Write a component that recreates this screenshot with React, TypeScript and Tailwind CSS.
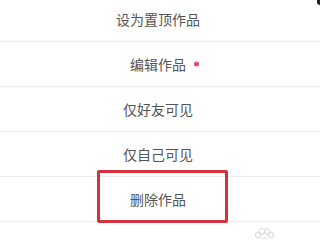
const rows = ['设为置顶作品', '编辑作品', '仅好友可见', '仅自己可见', '删除作品', '保存作品到相册'];

export default function App() {
  return (
    <div
      className="relative w-[320px] h-[239px] overflow-hidden bg-white"
      style={{ fontFamily: '"Noto Sans CJK SC", "Noto Sans", sans-serif' }}
    >
      <div className="-mt-[3px] flex flex-col">
        {rows.map((label, i) => (
          <div
            key={label}
            className={`relative flex h-[45px] shrink-0 items-center justify-center pr-1 text-[14px] text-[#555555] ${
              i < rows.length - 1 ? 'border-b border-[#ececec]' : ''
            }`}
          >
            <span className="relative leading-none">
              {label}
              {i === 1 && (
                <span className="absolute left-[calc(100%+8px)] top-1/2 h-[5px] w-[5px] -translate-y-1/2 rounded-full bg-[#e4476d]" />
              )}
            </span>
            {i === 4 && (
              <div className="pointer-events-none absolute left-[97px] top-[-7px] h-[53px] w-[131px] rounded-[2px] border-[3px] border-[#d3313c]" />
            )}
            {i === 5 && (
              <svg className="absolute left-[253px] top-[6px]" width="22" height="20" viewBox="0 0 22 20">
                <g fill="none" stroke="#d6d6d6" strokeWidth="1">
                  <ellipse cx="5" cy="7" rx="2.5" ry="3" />
                  <ellipse cx="9" cy="3.5" rx="2.5" ry="3" />
                  <ellipse cx="14" cy="3.5" rx="2.5" ry="3" />
                  <ellipse cx="18" cy="7" rx="2.5" ry="3" />
                  <path d="M6 17 C6 12 9 10 11.5 10 C14 10 17 12 17 17 Z" />
                </g>
              </svg>
            )}
          </div>
        ))}
      </div>
      <div className="absolute right-0 top-0 h-[5px] w-[3px] rounded-bl-full bg-[#222222]" />
    </div>
  );
}
